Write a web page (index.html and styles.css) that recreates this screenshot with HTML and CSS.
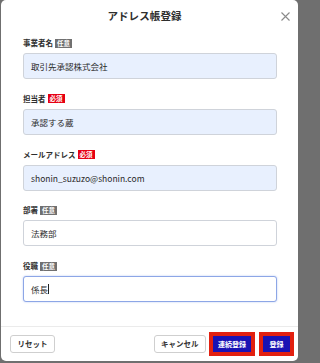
FILE: index.html
```html
<!DOCTYPE html>
<html lang="ja">
<head>
<meta charset="utf-8">
<title>アドレス帳登録</title>
<link rel="stylesheet" href="styles.css">
</head>
<body>
<div class="modal">
  <div class="header">
    <h1 class="title">アドレス帳登録</h1>
    <button class="close" aria-label="閉じる">
      <svg width="9" height="9" viewBox="0 0 9 9"><path d="M0.5 0.5 L8.5 8.5 M8.5 0.5 L0.5 8.5" stroke="#8a8a8a" stroke-width="1.1" fill="none"/></svg>
    </button>
  </div>
  <div class="body">
    <div class="field">
      <div class="label">事業者名<span class="badge optional">任意</span></div>
      <div class="input filled">取引先承認株式会社</div>
    </div>
    <div class="field">
      <div class="label">担当者<span class="badge required">必須</span></div>
      <div class="input filled">承認する蔵</div>
    </div>
    <div class="field">
      <div class="label">メールアドレス<span class="badge required">必須</span></div>
      <div class="input filled">shonin_suzuzo@shonin.com</div>
    </div>
    <div class="field">
      <div class="label">部署<span class="badge optional">任意</span></div>
      <div class="input">法務部</div>
    </div>
    <div class="field">
      <div class="label">役職<span class="badge optional">任意</span></div>
      <div class="input focused">係長<span class="caret"></span></div>
    </div>
  </div>
  <div class="footer">
    <button class="btn">リセット</button>
    <div class="actions">
      <button class="btn">キャンセル</button>
      <button class="btn primary marked wide">連続登録</button>
      <button class="btn primary marked">登録</button>
    </div>
  </div>
</div>
</body>
</html>
```

FILE: styles.css
```css
html, body {
  margin: 0;
  padding: 0;
}
html {
  background: #6f6f6f;
}
body {
  width: 300px;
  height: 363px;
  overflow: hidden;
  font-family: "Noto Sans CJK JP", "Noto Sans", sans-serif;
  color: #333;
}
.modal {
  margin: 0 2px 0 1px;
  height: 361px;
  background: #fff;
  border-radius: 5px;
  display: flex;
  flex-direction: column;
  overflow: hidden;
}
.header {
  position: relative;
  height: 32px;
  flex: none;
}
.title {
  margin: 0;
  font-size: 10.5px;
  font-weight: 700;
  line-height: 32px;
  text-align: center;
  padding-right: 10px;
  letter-spacing: 0.1px;
  color: #2e2e2e;
}
.close {
  position: absolute;
  right: 7px;
  top: 11px;
  width: 11px;
  height: 11px;
  padding: 1px;
  border: 0;
  background: none;
  display: flex;
  align-items: center;
  justify-content: center;
}
.body {
  flex: 1;
  padding: 6px 21px 0 22px;
  display: flex;
  flex-direction: column;
  gap: 14.75px;
}
.field {
  display: flex;
  flex-direction: column;
  gap: 5px;
}
.label {
  height: 10px;
  display: flex;
  align-items: center;
  font-size: 7.5px;
  font-weight: 700;
  color: #2e2e2e;
  line-height: 10px;
}
.badge {
  margin-left: 2px;
  height: 9px;
  padding: 0 2px;
  font-size: 6.5px;
  line-height: 9px;
  font-weight: 700;
  color: #fff;
}
.badge.optional {
  background: #707070;
}
.badge.required {
  background: #e60012;
}
.input {
  box-sizing: border-box;
  height: 26px;
  border: 1px solid #cfd3da;
  border-radius: 3px;
  background: #fff;
  padding: 0 7px;
  display: flex;
  align-items: center;
  font-size: 8.5px;
  color: #2a2a2a;
}
.input.filled {
  background: #e8f0fe;
}
.input.focused {
  border-color: #8da6e6;
  box-shadow: 0 0 2px rgba(90, 130, 230, 0.45);
}
.caret {
  display: inline-block;
  width: 1px;
  height: 10px;
  background: #222;
}
.footer {
  flex: none;
  height: 34px;
  border-top: 1px solid #ebebeb;
  display: flex;
  align-items: center;
  justify-content: space-between;
  padding: 0 7px 0 9px;
}
.actions {
  display: flex;
  align-items: center;
  gap: 6px;
}
.btn {
  box-sizing: border-box;
  height: 18px;
  padding: 0 6.5px;
  font-family: "Noto Sans CJK JP", "Noto Sans", sans-serif;
  font-size: 7.5px;
  font-weight: 700;
  color: #333;
  background: #fff;
  border: 1px solid #cfcfcf;
  border-radius: 3px;
  line-height: 16px;
}
.btn.primary {
  background: #1a12b4;
  color: #fff;
  border: 1px solid #e22010;
  border-radius: 0;
  font-size: 7px;
  padding: 0 6.5px;
}
.btn.primary.wide {
  padding: 0 5px;
}
.btn.marked {
  outline: 3px solid #e22010;
}
.btn.marked + .btn.marked {
  margin-left: 4px;
}
```
